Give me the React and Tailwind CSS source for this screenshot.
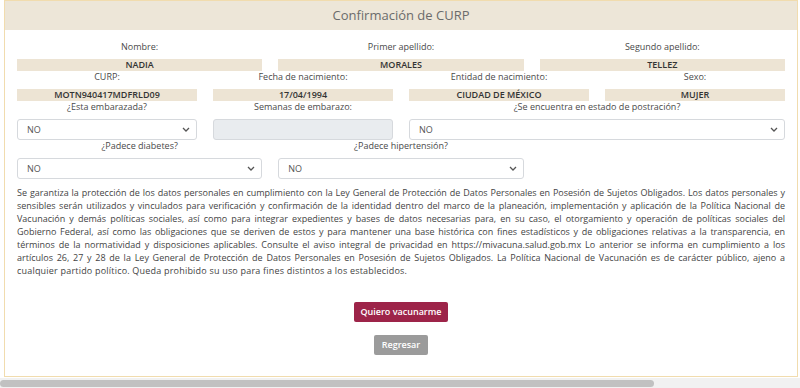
import React from 'react';

const lines = [
    'Se garantiza la protección de los datos personales en cumplimiento con la Ley General de Protección de Datos Personales en Posesión de Sujetos Obligados. Los datos personales y',
    'sensibles serán utilizados y vinculados para verificación y confirmación de la identidad dentro del marco de la planeación, implementación y aplicación de la Política Nacional de',
    'Vacunación y demás políticas sociales, así como para integrar expedientes y bases de datos necesarias para, en su caso, el otorgamiento y operación de políticas sociales del',
    'Gobierno Federal, así como las obligaciones que se deriven de estos y para mantener una base histórica con fines estadísticos y de obligaciones relativas a la transparencia, en',
    'términos de la normatividad y disposiciones aplicables. Consulte el aviso integral de privacidad en https://mivacuna.salud.gob.mx Lo anterior se informa en cumplimiento a los',
    'artículos 26, 27 y 28 de la Ley General de Protección de Datos Personales en Posesión de Sujetos Obligados. La Política Nacional de Vacunación es de carácter público, ajeno a',
];

const Label = ({ children }) => (
    <div className="h-[12px] mb-[6px] text-center text-[9px] leading-[12px] text-[#4a4a4a]">{children}</div>
);

const Field = ({ label, value }) => (
    <div>
        <Label>{label}</Label>
        <div className="h-[12px] bg-[#ede4d4] text-center text-[9px] leading-[12px] font-semibold text-[#333]">{value}</div>
    </div>
);

const Select = () => (
    <div className="h-[21px] border border-[#d6d9dd] rounded-[3px] bg-white flex items-center justify-between pl-[9px] pr-[6px] text-[9px] text-[#555]">
        <span>NO</span>
        <svg width="8" height="5" viewBox="0 0 8 5" fill="none">
            <path d="M1 1L4 4L7 1" stroke="#555" strokeWidth="1.3" />
        </svg>
    </div>
);

const App = () => {
    return (
        <div className="w-[800px] h-[388px] bg-white overflow-hidden font-['Open_Sans',sans-serif]">
            <div className="ml-[4px] w-[794px] h-[377px] border border-[#f1dcae]">
                <div className="h-[29px] bg-[#ede6d8] text-center text-[13px] leading-[29px] text-[#6b6b6b]">
                    Confirmación de CURP
                </div>
                <div className="px-[12px] pt-[11px]">
                    <div className="grid grid-cols-3 gap-x-4">
                        <Field label="Nombre:" value="NADIA" />
                        <Field label="Primer apellido:" value="MORALES" />
                        <Field label="Segundo apellido:" value="TELLEZ" />
                    </div>
                    <div className="grid grid-cols-4 gap-x-4">
                        <Field label="CURP:" value="MOTN940417MDFRLD09" />
                        <Field label="Fecha de nacimiento:" value="17/04/1994" />
                        <Field label="Entidad de nacimiento:" value="CIUDAD DE MÉXICO" />
                        <Field label="Sexo:" value="MUJER" />
                    </div>
                    <div className="grid grid-cols-4 gap-x-4">
                        <div>
                            <Label>¿Esta embarazada?</Label>
                            <Select />
                        </div>
                        <div>
                            <Label>Semanas de embarazo:</Label>
                            <div className="h-[21px] border border-[#d6d9dd] rounded-[3px] bg-[#e9ecef]" />
                        </div>
                        <div className="col-span-2">
                            <Label>¿Se encuentra en estado de postración?</Label>
                            <Select />
                        </div>
                    </div>
                    <div className="grid grid-cols-3 gap-x-4">
                        <div>
                            <Label>¿Padece diabetes?</Label>
                            <Select />
                        </div>
                        <div>
                            <Label>¿Padece hipertensión?</Label>
                            <Select />
                        </div>
                    </div>
                    <div className="mt-[7px] text-[9px] leading-[13px] text-[#444]">
                        {lines.map((l) => (
                            <div key={l} className="whitespace-nowrap text-justify [text-align-last:justify]">{l}</div>
                        ))}
                        <div className="tracking-[0.2px]">cualquier partido político. Queda prohibido su uso para fines distintos a los establecidos.</div>
                    </div>
                    <div className="mt-[25px] flex flex-col items-center gap-[13px]">
                        <button className="h-[20px] px-[6px] rounded-[2px] bg-[#9d2449] text-white text-[9px] font-semibold">
                            Quiero vacunarme
                        </button>
                        <button className="h-[20px] px-[8px] rounded-[2px] bg-[#9b9b9b] text-white text-[9px] font-semibold">
                            Regresar
                        </button>
                    </div>
                </div>
            </div>
            <div className="mt-[1px] h-[10px] bg-[#f1f1f1] pt-[2px]">
                <div className="w-[654px] h-[7px] rounded-full bg-[#c1c1c1]" />
            </div>
        </div>
    );
};

export default App;
